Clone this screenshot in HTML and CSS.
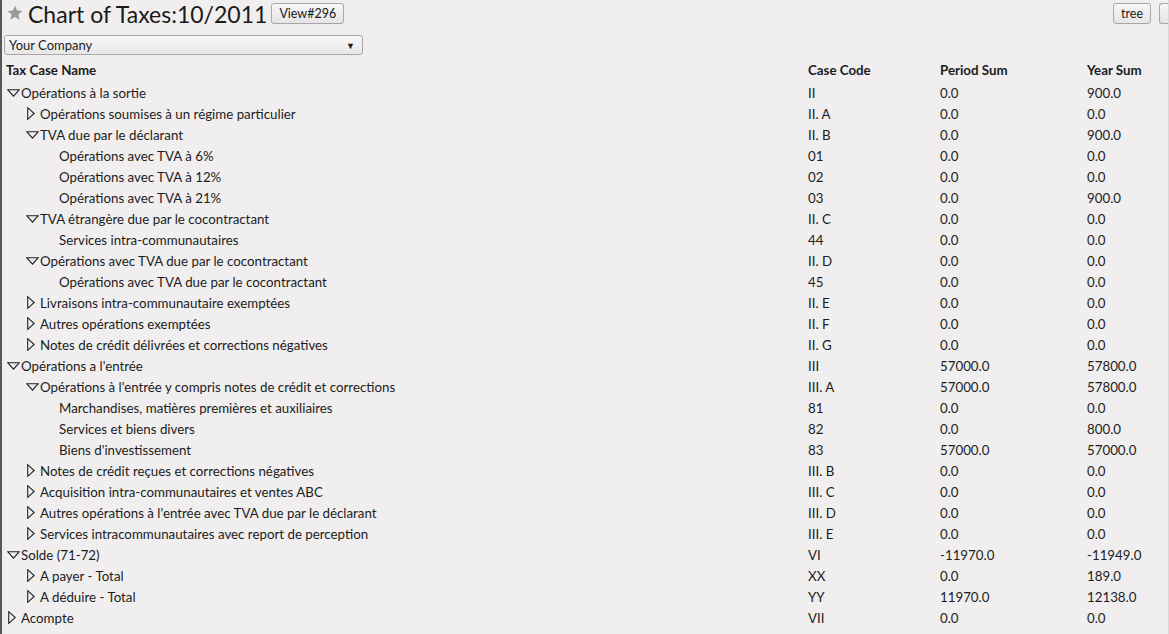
FILE: index.html
```html
<!DOCTYPE html>
<html lang="en">
<head>
  <meta charset="UTF-8" />
  <title>Chart of Taxes:10/2011</title>
  <link rel="stylesheet" href="styles.css">
</head>
<body>
  <div id="page">
    <div class="topbar">
      <svg class="star" width="16" height="16" viewBox="0 0 24 24"><path d="M12 1.2l3.2 7.2 7.8.7-5.9 5.2 1.8 7.7L12 17.9l-6.9 4.1 1.8-7.7L1 9.1l7.8-.7z" fill="#9a9a9a"/></svg>
      <h1 class="title">Chart of Taxes:10/2011</h1>
      <button class="btn">View#296</button>
      <div class="spacer"></div>
      <button class="btn">tree</button>
      <button class="btn btn-cut"></button>
    </div>

    <div class="company">
      <span>Your Company</span>
      <span class="arrow">&#9660;</span>
    </div>

    <div class="grid">
      <div class="row head">
        <div>Tax Case Name</div><div>Case Code</div><div>Period Sum</div><div>Year Sum</div>
      </div>

      <div class="row"><div class="name l0"><i class="tg open"></i>Opérations à la sortie</div><div>II</div><div>0.0</div><div>900.0</div></div>
      <div class="row"><div class="name l1"><i class="tg shut"></i>Opérations soumises à un régime particulier</div><div>II. A</div><div>0.0</div><div>0.0</div></div>
      <div class="row"><div class="name l1"><i class="tg open"></i>TVA due par le déclarant</div><div>II. B</div><div>0.0</div><div>900.0</div></div>
      <div class="row"><div class="name l2">Opérations avec TVA à 6%</div><div>01</div><div>0.0</div><div>0.0</div></div>
      <div class="row"><div class="name l2">Opérations avec TVA à 12%</div><div>02</div><div>0.0</div><div>0.0</div></div>
      <div class="row"><div class="name l2">Opérations avec TVA à 21%</div><div>03</div><div>0.0</div><div>900.0</div></div>
      <div class="row"><div class="name l1"><i class="tg open"></i>TVA étrangère due par le cocontractant</div><div>II. C</div><div>0.0</div><div>0.0</div></div>
      <div class="row"><div class="name l2">Services intra-communautaires</div><div>44</div><div>0.0</div><div>0.0</div></div>
      <div class="row"><div class="name l1"><i class="tg open"></i>Opérations avec TVA due par le cocontractant</div><div>II. D</div><div>0.0</div><div>0.0</div></div>
      <div class="row"><div class="name l2">Opérations avec TVA due par le cocontractant</div><div>45</div><div>0.0</div><div>0.0</div></div>
      <div class="row"><div class="name l1"><i class="tg shut"></i>Livraisons intra-communautaire exemptées</div><div>II. E</div><div>0.0</div><div>0.0</div></div>
      <div class="row"><div class="name l1"><i class="tg shut"></i>Autres opérations exemptées</div><div>II. F</div><div>0.0</div><div>0.0</div></div>
      <div class="row"><div class="name l1"><i class="tg shut"></i>Notes de crédit délivrées et corrections négatives</div><div>II. G</div><div>0.0</div><div>0.0</div></div>
      <div class="row"><div class="name l0"><i class="tg open"></i>Opérations a l'entrée</div><div>III</div><div>57000.0</div><div>57800.0</div></div>
      <div class="row"><div class="name l1"><i class="tg open"></i>Opérations à l'entrée y compris notes de crédit et corrections</div><div>III. A</div><div>57000.0</div><div>57800.0</div></div>
      <div class="row"><div class="name l2">Marchandises, matières premières et auxiliaires</div><div>81</div><div>0.0</div><div>0.0</div></div>
      <div class="row"><div class="name l2">Services et biens divers</div><div>82</div><div>0.0</div><div>800.0</div></div>
      <div class="row"><div class="name l2">Biens d'investissement</div><div>83</div><div>57000.0</div><div>57000.0</div></div>
      <div class="row"><div class="name l1"><i class="tg shut"></i>Notes de crédit reçues et corrections négatives</div><div>III. B</div><div>0.0</div><div>0.0</div></div>
      <div class="row"><div class="name l1"><i class="tg shut"></i>Acquisition intra-communautaires et ventes ABC</div><div>III. C</div><div>0.0</div><div>0.0</div></div>
      <div class="row"><div class="name l1"><i class="tg shut"></i>Autres opérations à l'entrée avec TVA due par le déclarant</div><div>III. D</div><div>0.0</div><div>0.0</div></div>
      <div class="row"><div class="name l1"><i class="tg shut"></i>Services intracommunautaires avec report de perception</div><div>III. E</div><div>0.0</div><div>0.0</div></div>
      <div class="row"><div class="name l0"><i class="tg open"></i>Solde (71-72)</div><div>VI</div><div>-11970.0</div><div>-11949.0</div></div>
      <div class="row"><div class="name l1"><i class="tg shut"></i>A payer - Total</div><div>XX</div><div>0.0</div><div>189.0</div></div>
      <div class="row"><div class="name l1"><i class="tg shut"></i>A déduire - Total</div><div>YY</div><div>11970.0</div><div>12138.0</div></div>
      <div class="row"><div class="name l0"><i class="tg shut"></i>Acompte</div><div>VII</div><div>0.0</div><div>0.0</div></div>
    </div>
  </div>
</body>
</html>
```

FILE: styles.css
```css
body {
  font-family: Lato, "Liberation Sans", sans-serif;
  font-size: 13.3px;
  color: #1c1c1c;
  background-color: #f0eeee;
  margin: 0;
  padding: 0;
}

#page {
  height: 634px;
  overflow: hidden;
  border-left: 2px solid #585858;
  border-right: 1px solid #d8d6d6;
  box-sizing: border-box;
}

.topbar {
  display: flex;
  align-items: center;
  height: 28px;
  padding: 0 0 0 5px;
}

.star {
  margin-right: 5px;
  margin-top: -3px;
}

.title {
  font-size: 23px;
  font-weight: normal;
  margin: 0 4px 0 0;
  color: #1a1a1a;
}

.btn {
  font-family: inherit;
  font-size: 12.5px;
  color: #1a1a1a;
  height: 21px;
  padding: 0 7px;
  margin-top: -2px;
  background: linear-gradient(#f7f7f7, #e6e4e4);
  border: 1px solid #a8a6a6;
  border-radius: 3px;
}

.spacer {
  flex: 1;
}

.btn-cut {
  width: 9px;
  margin-left: 8px;
  padding: 0;
  border-right: none;
  border-radius: 3px 0 0 3px;
}

.company {
  display: flex;
  justify-content: space-between;
  align-items: center;
  width: 359px;
  height: 20px;
  margin: 7px 0 0 2px;
  padding: 0 7px 0 4px;
  box-sizing: border-box;
  background: linear-gradient(#f9f9f9, #e8e7e7);
  border: 1px solid #a8a6a6;
  border-radius: 3px;
  font-size: 13px;
}

.arrow {
  font-size: 9px;
}

.grid {
  margin-top: 4px;
}

.row {
  display: grid;
  grid-template-columns: 802px 132px 147px 1fr;
  height: 21px;
  align-items: center;
  padding-left: 4px;
  white-space: nowrap;
}

.head {
  font-weight: bold;
  margin-bottom: 2px;
}

.name {
  display: flex;
  align-items: center;
}

.l1 { padding-left: 19px; }
.l2 { padding-left: 53px; }

.tg {
  display: inline-block;
  width: 15px;
  height: 13px;
  background-repeat: no-repeat;
  background-position: 1px center;
}

.tg.open {
  background-image: url("data:image/svg+xml;utf8,<svg xmlns='http://www.w3.org/2000/svg' width='13' height='8'><path d='M0.7 0.7h11.6L6.5 7.2z' fill='none' stroke='%23222' stroke-width='1.1'/></svg>");
}

.tg.shut {
  background-position: 2px center;
  background-image: url("data:image/svg+xml;utf8,<svg xmlns='http://www.w3.org/2000/svg' width='8' height='13'><path d='M0.7 0.7v11.6L7.2 6.5z' fill='none' stroke='%23222' stroke-width='1.1'/></svg>");
}
```
